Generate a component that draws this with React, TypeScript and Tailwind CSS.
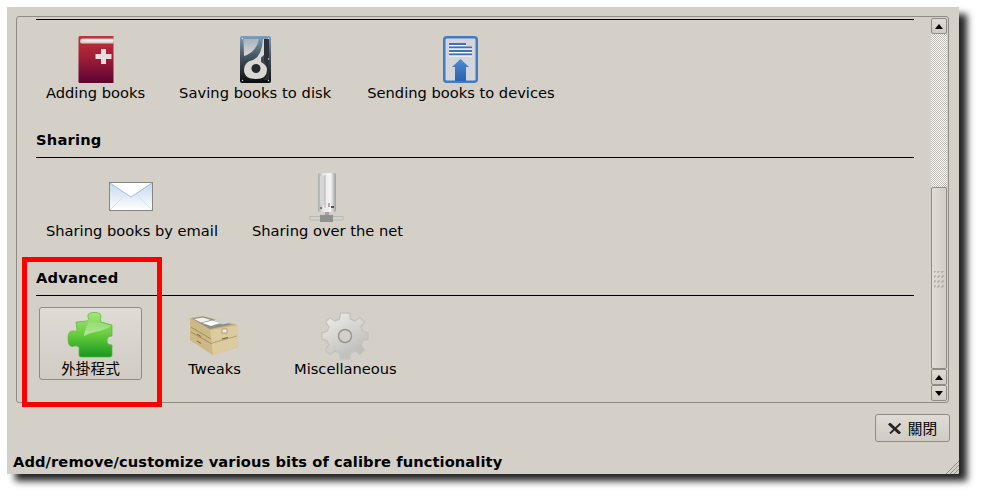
import type { ReactNode } from "react";

const AddIcon = () => (
  <svg width="48" height="48" viewBox="0 0 48 48">
    <defs>
      <linearGradient id="bookRed" x1="0" y1="0" x2="0" y2="1">
        <stop offset="0" stopColor="#c2323a" />
        <stop offset="0.45" stopColor="#a01e38" />
        <stop offset="1" stopColor="#5c0430" />
      </linearGradient>
    </defs>
    <path d="M8 0H41.500V47H8Q6.500 47 6.500 45.500V1.500Q6.500 0 8 0Z" fill="url(#bookRed)" />
    <path d="M10 2.500H41.500V7.500H10Q8 7.500 8 5T10 2.500Z" fill="#d8d0c8" />
    <path d="M10 3.500H41.500V5.500H10Z" fill="#f2efea" />
    <path d="M29 13H34V18H39.500V23H34V28H29V23H23.500V18H29Z" fill="#e6dede" />
  </svg>
);

const SaveIcon = () => (
  <svg width="48" height="48" viewBox="0 0 48 48">
    <defs>
      <linearGradient id="hddBody" x1="0" y1="0" x2="0" y2="1">
        <stop offset="0" stopColor="#7d9fbc" />
        <stop offset="0.4" stopColor="#4a5a68" />
        <stop offset="1" stopColor="#0c0c0e" />
      </linearGradient>
      <linearGradient id="hddPlate" x1="0" y1="0" x2="0" y2="1">
        <stop offset="0" stopColor="#a9b4bd" />
        <stop offset="1" stopColor="#d8d6d1" />
      </linearGradient>
    </defs>
    <rect x="9" y="0" width="31" height="47" rx="2" fill="url(#hddBody)" />
    <path d="M12.500 3H28Q26 14 16 19L13 20Z" fill="url(#hddPlate)" />
    <path d="M36 9Q36 18 30 21.500V26Q36 29 36 34Q36 43 25 43Q13 43 13 33.500Q13 26 22 24Q31 20 32 3H36Z" fill="#d9d7d2" />
    <path d="M33 3H38V44H32Q37 40 37 34Q37 29 33 26Z" fill="#2b3238" />
    <circle cx="25" cy="32.500" r="4.500" fill="#25282d" />
    <circle cx="11.500" cy="2.500" r="0.700" fill="#dde" />
    <circle cx="37.500" cy="2.500" r="0.700" fill="#dde" />
    <circle cx="37.500" cy="23" r="0.700" fill="#dde" />
    <circle cx="11.500" cy="44.500" r="0.700" fill="#dde" />
    <circle cx="37.500" cy="44.500" r="0.700" fill="#dde" />
  </svg>
);

const SendIcon = () => (
  <svg width="48" height="48" viewBox="0 0 48 48">
    <defs>
      <linearGradient id="sendArrow" x1="0" y1="0" x2="0" y2="1">
        <stop offset="0" stopColor="#4f8ccf" />
        <stop offset="1" stopColor="#2a62ad" />
      </linearGradient>
    </defs>
    <rect x="7.250" y="1.250" width="32.500" height="44.500" rx="2.500" fill="#d3d5da" stroke="#3f7cc4" strokeWidth="2.500" />
    <path d="M12 7H29V9H12ZM12 10.500H35V12.500H12ZM12 14H35V16H12ZM12 17.500H35V19.500H12Z" fill="#3d72b4" />
    <path d="M12 9H29V10H12ZM12 12.500H35V13.500H12ZM12 16H35V17H12ZM12 19.500H35V20.500H12Z" fill="#fff" />
    <path d="M23.500 23L32 31H29V45H18V31H15Z" fill="url(#sendArrow)" />
  </svg>
);

const MailIcon = () => (
  <svg width="48" height="48" viewBox="0 0 48 48">
    <defs>
      <linearGradient id="mailBody" x1="0" y1="0" x2="0" y2="1">
        <stop offset="0" stopColor="#c5d8ef" />
        <stop offset="1" stopColor="#ffffff" />
      </linearGradient>
    </defs>
    <rect x="1.500" y="8.500" width="43" height="28" fill="url(#mailBody)" stroke="#85847f" />
    <path d="M2 9L23 23L44 9Z" fill="#fdfeff" />
    <path d="M2 9L23 23L44 9" fill="none" stroke="#9dbde3" />
    <path d="M2 36L18 20M44 36L28 20" stroke="#d4e0f0" fill="none" />
  </svg>
);

const ServerIcon = () => (
  <svg width="48" height="48" viewBox="0 0 48 48" className="overflow-visible">
    <defs>
      <linearGradient id="towerBody" x1="0" y1="0" x2="1" y2="0">
        <stop offset="0" stopColor="#a8a8a8" />
        <stop offset="0.3" stopColor="#e8e8e8" />
        <stop offset="0.7" stopColor="#f4f4f4" />
        <stop offset="1" stopColor="#9c9c9c" />
      </linearGradient>
    </defs>
    <rect x="14" y="-1" width="18" height="39" rx="2" fill="url(#towerBody)" />
    <path d="M16 2H21V31H16Z" fill="#d6d6d6" />
    <path d="M21 1V34" stroke="#b4b4b4" />
    <path d="M24.500 29H25.500V33H24.500Z" fill="#a44" />
    <rect x="27" y="32" width="3" height="2" fill="#555" />
    <rect x="16" y="33" width="2" height="2" fill="#777" />
    <rect x="21" y="38" width="4" height="5" fill="#a2a2a2" />
    <rect x="6" y="42.500" width="33" height="3.500" fill="#d2d2d0" stroke="#a8a8a4" strokeWidth="0.600" />
    <rect x="16" y="41" width="13" height="7" fill="#909090" />
  </svg>
);

const PuzzleIcon = () => (
  <svg width="48" height="48" viewBox="0 0 48 48">
    <defs>
      <linearGradient id="puzzleGreen" x1="0" y1="0" x2="0" y2="1">
        <stop offset="0" stopColor="#a8e67e" />
        <stop offset="0.5" stopColor="#66cc3c" />
        <stop offset="1" stopColor="#17961f" />
      </linearGradient>
      <linearGradient id="puzzleShine" x1="0" y1="0" x2="0" y2="1">
        <stop offset="0" stopColor="#ffffff" stopOpacity="0.1" />
        <stop offset="1" stopColor="#ffffff" stopOpacity="0.55" />
      </linearGradient>
    </defs>
    <path
      d="M9 10L20 9Q23 8 21 5Q20 1 26 0.500Q34 0 34 4Q33 8 34 10L45 13V24Q40 24 40 29Q40 33 45 33V43Q45 45 43 45H14Q12 45 12 43V35Q9 33 6 34.500Q1 35 1 27Q1 18 6 19Q9 20 10 18Z"
      fill="url(#puzzleGreen)"
      stroke="#58b836"
      strokeWidth="0.700"
    />
    <path d="M22 10L34 11L44 14Q36 19 28 20Q22 21 17 24Q18 16 22 10Z" fill="url(#puzzleShine)" />
  </svg>
);

const CabinetIcon = () => (
  <svg width="48" height="48" viewBox="0 0 48 48" className="overflow-visible">
    <path d="M-1 6L12 4L47 13V35L22 43L-1 28Z" fill="#c8b27c" />
    <path d="M-1 6L19 18L22 43L-1 28Z" fill="#cdb985" />
    <path d="M19 18L47 13V35L22 43Z" fill="#dccb9e" />
    <path d="M1 6.500L12 4.500L41 12.500L19 17Z" fill="#8f8d86" />
    <path d="M3 7L12 5.500L20 8L10 10.500Z" fill="#f0f0ee" />
    <path d="M11 11L21 8.500L30 11L20 14Z" fill="#fbfbf9" />
    <path d="M22 8L30 6.500L38 11L31 12.500Z" fill="#cfcfcc" />
    <path d="M0 15L20 27M0 20L21 32" stroke="#94804f" strokeWidth="0.800" />
    <path d="M21 31L46 24" stroke="#a8945f" strokeWidth="0.800" />
    <rect x="31" y="17" width="5" height="4" fill="#f0ead8" stroke="#7d6b42" strokeWidth="0.500" />
    <path d="M31 27L37 25.500" stroke="#6f5f38" strokeWidth="1.200" />
    <path d="M6 22L10 24.500M6 29L10 31.500" stroke="#7d6b42" />
  </svg>
);

const GearIcon = () => (
  <svg width="48" height="48" viewBox="0 0 48 48">
    <defs>
      <linearGradient id="gearMetal" x1="0" y1="0" x2="0.600" y2="1">
        <stop offset="0" stopColor="#f1f0ee" />
        <stop offset="0.55" stopColor="#d4d3d0" />
        <stop offset="1" stopColor="#bdbcb8" />
      </linearGradient>
    </defs>
    <path
      d="M19.500 1H28.500L29.500 7L34 9L39 5.500L43.500 10L40 15L42 19.500L47 20.500V27.500L42 28.500L40 33L43.500 38L39 42.500L34 39L29.500 41L28.500 47H19.500L18.500 41L14 39L9 42.500L4.500 38L8 33L6 28.500L1 27.500V20.500L6 19.500L8 15L4.500 10L9 5.500L14 9L18.500 7Z"
      fill="url(#gearMetal)"
      stroke="#c4c3bf"
      strokeWidth="1.500"
      strokeLinejoin="round"
    />
    <circle cx="24" cy="24" r="6.500" fill="#d4d0c8" stroke="#98978f" strokeWidth="1.500" />
  </svg>
);

type ItemProps = { icon: ReactNode; label: string; active?: boolean; className?: string };

const Item = ({ icon, label, active, className = "" }: ItemProps) => (
  <div
    className={
      active
        ? `h-[73px] min-w-[103px] px-[6px] pt-[4px] flex flex-col items-center rounded-[3px] border border-[#8e8c84] bg-gradient-to-b from-[#dfdbd5] to-[#d0ccc4] ${className}`
        : `h-[73px] min-w-[103px] px-[7px] pt-[5px] flex flex-col items-center ${className}`
    }
  >
    <div className="h-[48px] w-[48px] shrink-0">{icon}</div>
    <span className="leading-[17px] whitespace-nowrap">{label}</span>
  </div>
);

const SectionTitle = ({ children }: { children: ReactNode }) => (
  <div className="pt-[27px] pb-[9px] leading-[17px] font-bold tracking-[0.2px] border-b border-black">{children}</div>
);

const Arrow = ({ up }: { up?: boolean }) => (
  <div className="h-[16px] flex items-center justify-center rounded-[2px] border border-[#8e8c84] bg-gradient-to-b from-[#dfdbd5] to-[#d0ccc4]">
    <svg width="8" height="5" viewBox="0 0 8 5">
      <path d={up ? "M4 0L8 5H0Z" : "M0 0H8L4 5Z"} fill="#000" />
    </svg>
  </div>
);

const Scrollbar = () => (
  <div className="w-[16px] mr-[1px] my-[1px] flex flex-col shrink-0">
    <Arrow up />
    <div className="h-[153px] bg-[repeating-conic-gradient(#bdbab3_0_25%,#ffffff_0_50%)] bg-[length:2px_2px]" />
    <div className="h-[182px] flex items-center justify-center rounded-[2px] border border-[#8e8c84] bg-gradient-to-r from-[#e0ddd7] to-[#d2cec6]">
      <svg width="10" height="19" viewBox="0 0 10 19" className="mt-[4px]">
        {[0, 1, 2, 3].map((r) =>
          [0, 1, 2].map((c) => (
            <path key={`${r}-${c}`} d={`M${c * 4} ${r * 5 + 2}V${r * 5}H${c * 4 + 2}`} fill="none" stroke="#a3a099" />
          )),
        )}
      </svg>
    </div>
    <Arrow up />
    <Arrow />
  </div>
);

const SizeGrip = () => (
  <svg width="13" height="13" viewBox="0 0 13 13" className="absolute right-0 bottom-0">
    <path d="M0 13L13 0M4 13L13 4M8 13L13 8M12 13L13 12" stroke="#8e8c84" />
  </svg>
);

export default function App() {
  return (
    <div className="relative w-[982px] h-[497px] overflow-hidden bg-white pl-[7px] pt-[7px] text-[14.67px] text-black font-['DejaVu_Sans','Noto_Sans_CJK_TC',sans-serif]">
      <div className="relative w-[952px] h-[467px] bg-[#d4d0c8] shadow-[8px_7px_7px_rgba(0,0,0,0.85)] flex flex-col">
        <div className="ml-[9px] mt-[9px] w-[933px] h-[387px] flex rounded-[3px] border border-[#8e8c84]">
          <div className="flex-1 overflow-hidden pl-[19px] pr-[17px] pt-[2px]">
            <div className="border-b border-black" />
            <div className="mt-[11px] ml-[3px] flex gap-[20px]">
              <Item icon={<AddIcon />} label="Adding books" />
              <Item icon={<SaveIcon />} label="Saving books to disk" className="tracking-[0.05px]" />
              <Item icon={<SendIcon />} label="Sending books to devices" className="ml-[2px]" />
            </div>
            <SectionTitle>Sharing</SectionTitle>
            <div className="mt-[11px] ml-[3px] flex gap-[20px]">
              <Item icon={<MailIcon />} label="Sharing books by email" />
              <Item icon={<ServerIcon />} label="Sharing over the net" />
            </div>
            <SectionTitle>Advanced</SectionTitle>
            <div className="mt-[11px] ml-[3px] flex gap-[21px]">
              <Item icon={<PuzzleIcon />} label="外掛程式" active />
              <Item icon={<CabinetIcon />} label="Tweaks" />
              <Item icon={<GearIcon />} label="Miscellaneous" />
            </div>
          </div>
          <Scrollbar />
        </div>
        <div className="mt-[11px] mr-[9px] self-end w-[75px] h-[28px] flex items-center justify-center gap-[6px] rounded-[3px] border border-[#8e8c84] bg-gradient-to-b from-[#dfdbd5] to-[#d0ccc4]">
          <svg width="14" height="11" viewBox="0 0 14 11">
            <path d="M1 0.500L12 10.500" stroke="#222" strokeWidth="3" />
            <path d="M12.500 0.500L2 10.500" stroke="#222" strokeWidth="1.800" />
          </svg>
          <span className="leading-[17px]">關閉</span>
        </div>
        <div className="mt-[11px] ml-[6px] leading-[17px] font-bold tracking-[0.09px]">Add/remove/customize various bits of calibre functionality</div>
        <SizeGrip />
      </div>
      <div className="absolute left-[22px] top-[257px] w-[140px] h-[150px] border-[5px] border-[#ff0000]" />
    </div>
  );
}
